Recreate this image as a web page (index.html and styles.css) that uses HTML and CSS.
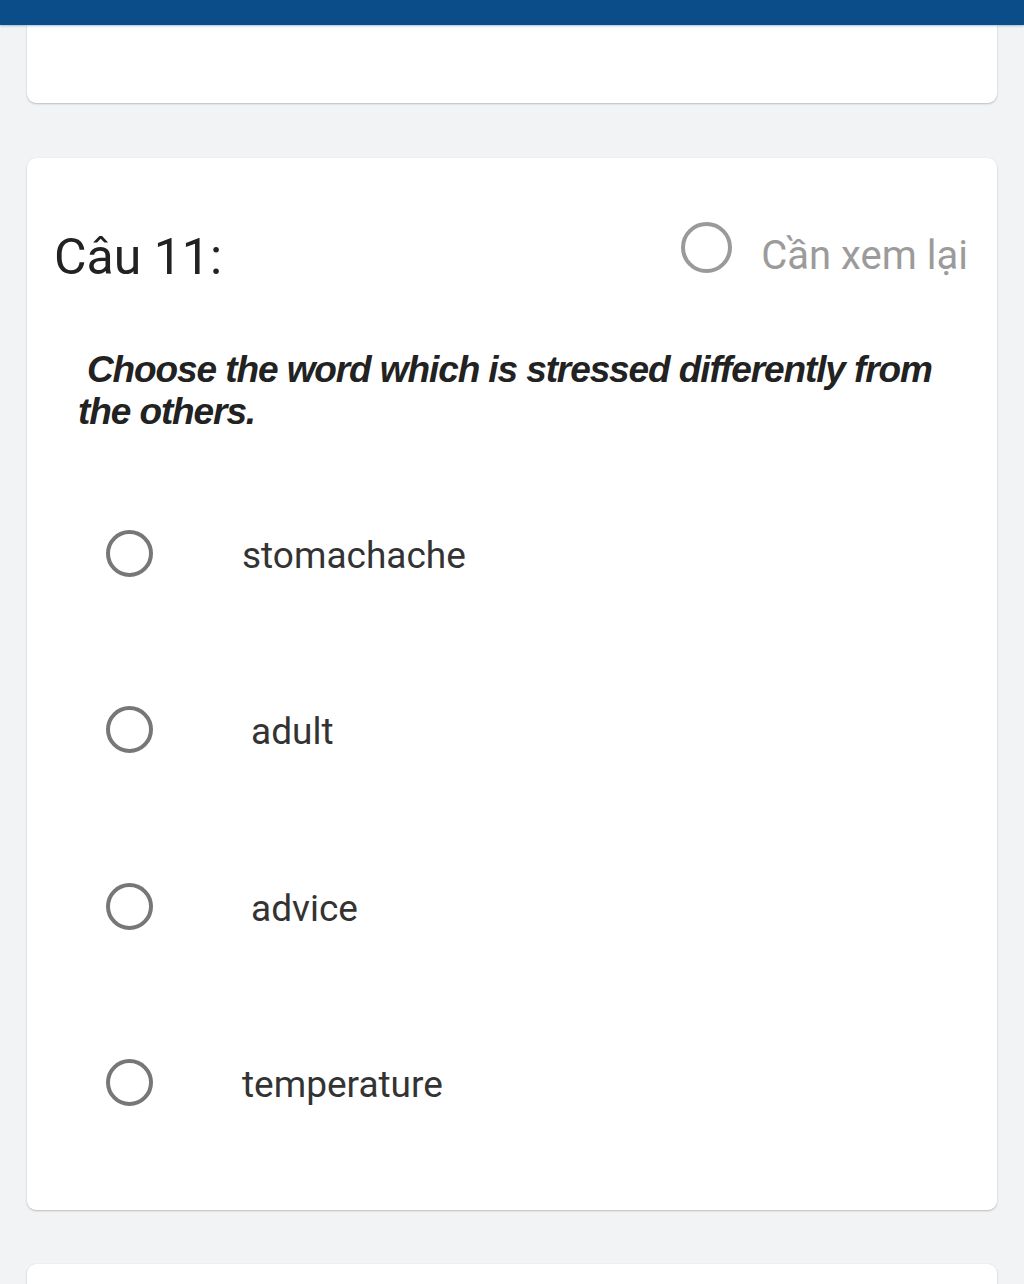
FILE: index.html
```html
<!DOCTYPE html>
<html lang="vi">
<head>
<meta charset="utf-8">
<title>Câu 11</title>
<link rel="stylesheet" href="styles.css">
</head>
<body>
<div class="topbar"></div>
<div class="card card-prev"></div>
<div class="card card-main">
  <div class="head">
    <div class="title">Câu 11:</div>
    <div class="review">
      <span class="ring ring-review"></span>
      <span class="review-text">Cần xem lại</span>
    </div>
  </div>
  <div class="question">Choose the word which is stressed differently from the others.</div>
  <div class="options">
    <div class="option"><span class="ring ring-opt"></span><span class="opt-text">stomachache</span></div>
    <div class="option"><span class="ring ring-opt"></span><span class="opt-text indent">adult</span></div>
    <div class="option"><span class="ring ring-opt"></span><span class="opt-text indent">advice</span></div>
    <div class="option"><span class="ring ring-opt"></span><span class="opt-text">temperature</span></div>
  </div>
</div>
<div class="card card-next"></div>
</body>
</html>
```
FILE: styles.css
```css
html, body {
  margin: 0;
  padding: 0;
  background: #f2f3f5;
  font-family: Roboto, "Noto Sans", sans-serif;
  overflow: hidden;
}
.topbar {
  height: 25px;
  background: #0b4d89;
  box-shadow: 0 1px 2px rgba(11, 77, 137, 0.35);
  position: relative;
  z-index: 2;
}
.card {
  background: #fff;
  margin: 0 27px;
  border-radius: 9px;
  box-shadow: 0 1px 2px rgba(0, 0, 0, 0.22), 0 0 1px rgba(0, 0, 0, 0.08);
}
.card-prev {
  height: 78px;
  border-radius: 0 0 9px 9px;
}
.card-main {
  margin-top: 55px;
  height: 1052px;
  box-sizing: border-box;
  padding: 65px 29px 0 27px;
}
.card-next {
  margin-top: 54px;
  height: 60px;
}
.head {
  display: flex;
  justify-content: space-between;
  align-items: center;
  height: 64px;
}
.title {
  font-size: 50px;
  color: #222;
  padding-top: 4px;
}
.review {
  display: flex;
  align-items: center;
  gap: 29px;
}
.ring {
  display: inline-block;
  box-sizing: border-box;
  border-radius: 50%;
  flex: none;
}
.ring-review {
  width: 51px;
  height: 51px;
  border: 4px solid #9a9a9a;
  margin-top: -16px;
}
.review-text {
  font-size: 40px;
  color: #9b9b9b;
}
.question {
  margin: 62px 0 0 24px;
  font-family: "Liberation Sans", Arial, sans-serif;
  font-weight: bold;
  font-style: italic;
  font-size: 37px;
  line-height: 42px;
  letter-spacing: -1.1px;
  color: #222;
  text-indent: 9px;
  width: 880px;
}
.options {
  margin-top: 32px;
  display: flex;
  flex-direction: column;
}
.option {
  height: 176.5px;
  display: flex;
  align-items: center;
  padding-left: 52px;
}
.ring-opt {
  width: 47px;
  height: 47px;
  border: 4px solid #777;
}
.opt-text {
  margin-left: 89px;
  font-size: 37px;
  color: #333;
  margin-top: 4px;
}
.opt-text.indent {
  margin-left: 98px;
}
```
